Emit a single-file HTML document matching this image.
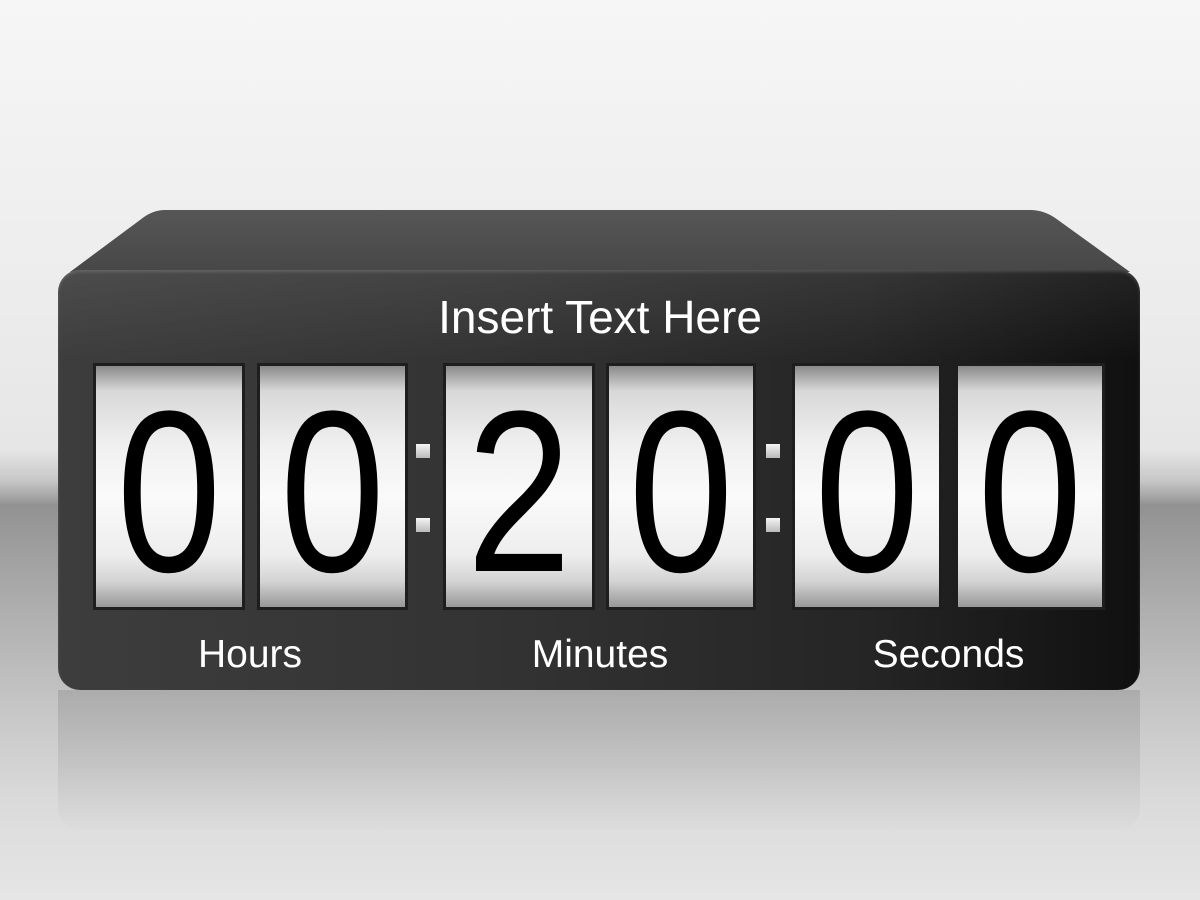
<!DOCTYPE html>
<html><head><meta charset="utf-8"><style>
html,body{margin:0;padding:0}
body{width:1200px;height:900px;position:relative;overflow:hidden;font-family:"Liberation Sans",sans-serif;
background:linear-gradient(#f6f6f6 0px,#ececec 300px,#e6e6e6 450px,#c8c8c8 480px,#9e9e9e 500px,#929292 505px,#acacac 600px,#c4c4c4 700px,#dadada 800px,#e6e6e6 900px);}
.refl{position:absolute;left:58px;top:690px;width:1082px;height:140px;border-radius:0 0 22px 22px;
background:linear-gradient(rgba(150,150,150,0.5),rgba(210,210,210,0.1));}
.top{position:absolute;left:0;top:0;width:1200px;height:300px}
.front{position:absolute;left:58px;top:270px;width:1082px;height:420px;border-radius:22px;
background:linear-gradient(90deg,#3d3d3d 0%,#333 40%,#252525 75%,#101010 100%);box-shadow:inset 0 2px 3px rgba(255,255,255,0.15);}
.front:before{content:"";position:absolute;left:0;right:0;top:0;height:90px;border-radius:22px 22px 0 0;background:linear-gradient(rgba(255,255,255,0.08),rgba(255,255,255,0));}
.card{position:absolute;top:363px;height:247px;box-sizing:border-box;border:3px solid #1e1e1e;overflow:hidden;
background:linear-gradient(#8a8a8a 0px,#d8d8d8 25px,#f0f0f0 80px,#fafafa 130px,#ededed 190px,#d4d4d4 215px,#9a9a9a 240px);}
.card span{position:absolute;left:0;right:0;top:2px;text-align:center;font-size:230px;line-height:247px;color:#000;transform:scaleX(0.82);}
.sq{position:absolute;width:14px;height:14px;background:linear-gradient(#f4f4f4,#bbb)}
.t{position:absolute;color:#fff;text-align:center}
</style></head><body>
<div class="refl"></div>
<svg class="top" viewBox="0 0 1200 300"><defs><linearGradient id="g" x1="0" y1="0" x2="0" y2="1"><stop offset="0" stop-color="#565656"/><stop offset="1" stop-color="#474747"/></linearGradient></defs>
<path d="M165 210 H1030 Q1045 210 1058 220 L1130 272 L70 272 L140 220 Q152 210 165 210 Z" fill="url(#g)"/></svg>
<div class="front"></div>
<div class="t" style="left:300px;width:600px;top:290px;font-size:46px">Insert Text Here</div>
<div class="card" style="left:93px;width:152px"><span>0</span></div>
<div class="card" style="left:257px;width:151px"><span>0</span></div>
<div class="card" style="left:443px;width:152px"><span>2</span></div>
<div class="card" style="left:606px;width:150px"><span>0</span></div>
<div class="card" style="left:792px;width:150px"><span>0</span></div>
<div class="card" style="left:955px;width:150px"><span>0</span></div>
<div class="sq" style="left:416px;top:444px"></div><div class="sq" style="left:416px;top:518px"></div>
<div class="sq" style="left:766px;top:444px"></div><div class="sq" style="left:766px;top:518px"></div>
<div class="t" style="left:150px;width:200px;top:633px;font-size:39px">Hours</div>
<div class="t" style="left:450px;width:300px;top:633px;font-size:39px">Minutes</div>
<div class="t" style="left:800px;width:297px;top:633px;font-size:39px">Seconds</div>
</body></html>
